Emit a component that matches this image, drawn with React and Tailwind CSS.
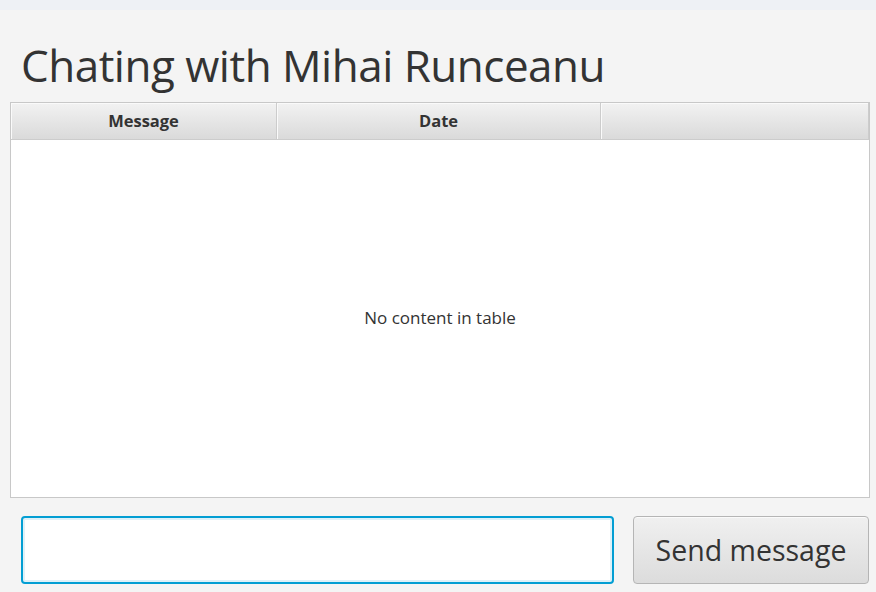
export default function App() {
  return (
    <div className="w-[876px] h-[592px] bg-[#f4f4f4] overflow-hidden text-[#333333]" style={{ fontFamily: '"Open Sans", "Noto Sans", sans-serif' }}>
      <div className="h-[10px] bg-[#eef1f5]" />
      <h1 className="ml-[21px] mt-[21px] h-[71px] text-[44px] leading-[68px] tracking-[-0.5px] text-[#333333]">Chating with Mihai Runceanu</h1>

      <div className="ml-[10px] w-[860px] h-[396px] border border-[#c8c8c8] bg-white flex flex-col">
        <div className="flex h-[37px] bg-gradient-to-b from-[#f2f2f2] to-[#dadada] border-b border-[#cccccc] text-[16.5px] font-bold">
          <div className="w-[266px] flex items-center justify-center border-r border-[#cccccc] shadow-[inset_1px_1px_0_#fafafa]">Message</div>
          <div className="w-[324px] flex items-center justify-center border-r border-[#cccccc] shadow-[inset_1px_1px_0_#fafafa]">Date</div>
          <div className="flex-1 border-r border-[#cccccc] shadow-[inset_1px_1px_0_#fafafa]" />
        </div>
        <div className="flex-1 flex items-center justify-center text-[17px] pb-[2px]">No content in table</div>
      </div>

      <div className="flex mt-[18px] ml-[21px] gap-[19px]">
        <div className="w-[593px] h-[68px] rounded-[4px] border-2 border-[#039ed3] bg-white shadow-[inset_0_0_0_2px_#dff1f8]" />
        <button className="w-[236px] h-[68px] rounded-[4px] border border-[#b5b5b5] bg-gradient-to-b from-[#f0f0f0] to-[#dcdcdc] text-[28.5px] text-[#333333] shadow-[inset_0_1px_0_#fafafa]">Send message</button>
      </div>
    </div>
  );
}
